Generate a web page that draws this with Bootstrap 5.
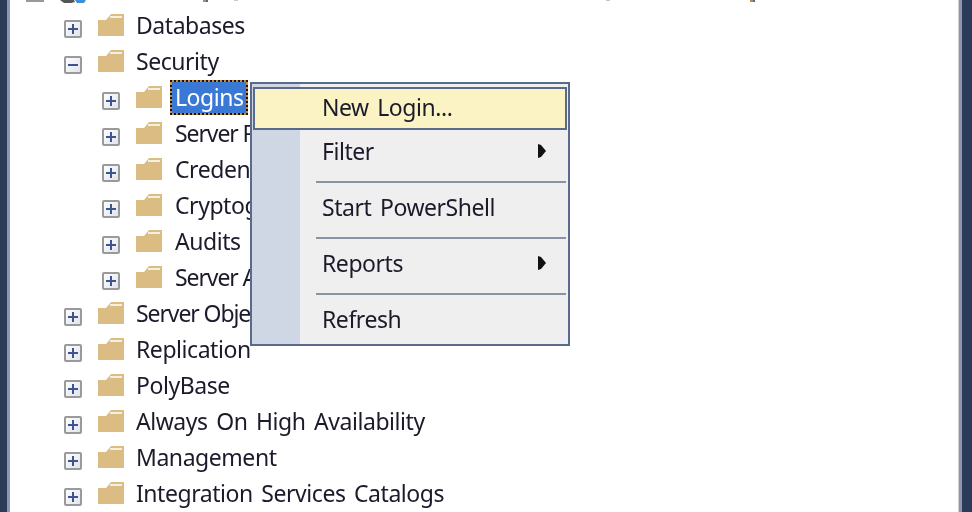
<!DOCTYPE html>
<html lang="en">
<head>
<meta charset="utf-8">
<title>Object Explorer</title>
<link href="https://cdn.jsdelivr.net/npm/bootstrap@5.3.0/dist/css/bootstrap.min.css" rel="stylesheet">
<style>
html,body{width:972px;height:512px;overflow:hidden;background:#fff}
.frame{width:972px;height:512px;background:#2b3b58;padding:0 10px 0 7px;filter:blur(.45px)}
.panel{height:512px;background:#fff;border-left:3px solid #8d97b3;border-right:3px solid #8d97b3;box-shadow:inset -1px 0 0 #d0d0d0;overflow:hidden;position:relative;font-family:"Noto Sans","Liberation Sans",sans-serif;font-size:23px;letter-spacing:-.45px;word-spacing:3px;color:#1b1b2b}
.tree,.tree ul{list-style:none;margin:0;padding:0}
.tree{padding-left:54px}
.tree ul{padding-left:38px}
.top-row{height:36px;margin-top:-28px;margin-left:-54px;display:block}
.tree-row{height:36px;display:flex;align-items:flex-start;line-height:36px}
.exp{width:18px;height:18px;flex:none;margin-top:12px;margin-right:16px}
.folder{width:26px;height:22px;flex:none;margin-top:6px;margin-right:12px}
.tree ul .folder{margin-right:13px}
.label{white-space:nowrap;margin-top:-1px;height:36px;line-height:36px}
.tight{letter-spacing:-1.1px;word-spacing:0}
.tree ul .sel{background:linear-gradient(#3a78d6,#3a78d6) padding-box,#c98a3a border-box;color:#fff;border:2px dotted #1a1206;padding:0 3px;margin-left:-5px;margin-top:0;height:35px;line-height:31px;width:78px}
.ctx.dropdown-menu{position:absolute;left:240px;top:82px;width:320px;height:264px;padding:3px 1px 0 1px;border:2px solid #5a6a8c;border-radius:0;background:linear-gradient(to right,#cfd6e4 48px,#efefef 48px);font-size:23px;display:block;margin:0;min-width:0}
.ctx .dropdown-item{display:flex;justify-content:space-between;align-items:center;height:53px;padding:0 21px 7px 69px;color:#1b1b2b;background:transparent;white-space:nowrap}
.ctx .dropdown-item.hot{height:43px;margin-bottom:1px;margin-right:4px;padding:0 0 2px 67px;background:#fbf3c4;border:2px solid #5b6a8a}
.ctx .dropdown-item.first{height:50px;padding-bottom:10px}
.ctx .dropdown-item.last{height:46px;padding-bottom:0}
.ctx .dropdown-divider{height:2px;margin:0 1px 1px 63px;border:0;background:#8a93a6;opacity:1}
.arrow{width:8px;height:14px;flex:none}
</style>
</head>
<body>
<div class="frame">
<div class="panel">
<ul class="tree">
  <li>
    <svg class="top-row" width="800" height="36" viewBox="0 0 800 36" aria-hidden="true">
      <rect x="16" y="28" width="18" height="2" fill="#999"/>
      <path d="M50 28h14l1 2-4 1h-7z" fill="#555"/>
      <path d="M65 28h11l-2 3h-7z" fill="#3d8fdc"/>
      <rect x="193" y="28" width="3" height="2" fill="#b98a50"/>
      <rect x="196" y="28" width="2" height="2" fill="#3f6fb0"/>
      <rect x="224" y="28" width="4" height="1" fill="#c8c8c8"/>
      <rect x="596" y="28" width="4" height="1" fill="#c8c8c8"/>
      <rect x="740" y="28" width="3" height="2" fill="#b98a50"/>
      <rect x="743" y="28" width="2" height="2" fill="#3f6fb0"/>
    </svg>
  </li>
  <li class="tree-row"><svg class="exp"><use href="#plus"/></svg><svg class="folder"><use href="#fold"/></svg><span class="label">Databases</span></li>
  <li>
    <div class="tree-row"><svg class="exp"><use href="#minus"/></svg><svg class="folder"><use href="#fold"/></svg><span class="label">Security</span></div>
    <ul>
      <li class="tree-row"><svg class="exp"><use href="#plus"/></svg><svg class="folder"><use href="#fold"/></svg><span class="label sel">Logins</span></li>
      <li class="tree-row"><svg class="exp"><use href="#plus"/></svg><svg class="folder"><use href="#fold"/></svg><span class="label tight">Server Roles</span></li>
      <li class="tree-row"><svg class="exp"><use href="#plus"/></svg><svg class="folder"><use href="#fold"/></svg><span class="label">Credentials</span></li>
      <li class="tree-row"><svg class="exp"><use href="#plus"/></svg><svg class="folder"><use href="#fold"/></svg><span class="label">Cryptographic Providers</span></li>
      <li class="tree-row"><svg class="exp"><use href="#plus"/></svg><svg class="folder"><use href="#fold"/></svg><span class="label">Audits</span></li>
      <li class="tree-row"><svg class="exp"><use href="#plus"/></svg><svg class="folder"><use href="#fold"/></svg><span class="label tight">Server Audit Specifications</span></li>
    </ul>
  </li>
  <li class="tree-row"><svg class="exp"><use href="#plus"/></svg><svg class="folder"><use href="#fold"/></svg><span class="label tight">Server Objects</span></li>
  <li class="tree-row"><svg class="exp"><use href="#plus"/></svg><svg class="folder"><use href="#fold"/></svg><span class="label">Replication</span></li>
  <li class="tree-row"><svg class="exp"><use href="#plus"/></svg><svg class="folder"><use href="#fold"/></svg><span class="label">PolyBase</span></li>
  <li class="tree-row"><svg class="exp"><use href="#plus"/></svg><svg class="folder"><use href="#fold"/></svg><span class="label">Always On High Availability</span></li>
  <li class="tree-row"><svg class="exp"><use href="#plus"/></svg><svg class="folder"><use href="#fold"/></svg><span class="label">Management</span></li>
  <li class="tree-row"><svg class="exp"><use href="#plus"/></svg><svg class="folder"><use href="#fold"/></svg><span class="label">Integration Services Catalogs</span></li>
</ul>

<div class="dropdown-menu show ctx">
  <a class="dropdown-item hot" href="#">New Login...</a>
  <a class="dropdown-item first" href="#">Filter<svg class="arrow" viewBox="0 0 8 14"><path d="M0 0l3 1 5 6-5 6-3 1z" fill="#111"/></svg></a>
  <hr class="dropdown-divider">
  <a class="dropdown-item" href="#">Start PowerShell</a>
  <hr class="dropdown-divider">
  <a class="dropdown-item" href="#">Reports<svg class="arrow" viewBox="0 0 8 14"><path d="M0 0l3 1 5 6-5 6-3 1z" fill="#111"/></svg></a>
  <hr class="dropdown-divider">
  <a class="dropdown-item last" href="#">Refresh</a>
</div>
</div>
</div>

<svg width="0" height="0" class="d-block" aria-hidden="true">
  <defs>
    <linearGradient id="g" x1="0" y1="0" x2="1" y2="1"><stop offset="0" stop-color="#fff"/><stop offset="1" stop-color="#dfe2ea"/></linearGradient>
    <symbol id="fold" viewBox="0 0 26 22"><path d="M0 6h8l5-6h13v22H0z" fill="#dbbd84"/><rect x="12" y="2" width="12" height="2" fill="#f6efe0"/></symbol>
    <symbol id="plus" viewBox="0 0 18 18"><rect x="1" y="1" width="16" height="16" rx="1" fill="url(#g)" stroke="#9a9a9a" stroke-width="2"/><path d="M4 9h10M9 4v10" stroke="#3c5590" stroke-width="2"/></symbol>
    <symbol id="minus" viewBox="0 0 18 18"><rect x="1" y="1" width="16" height="16" rx="1" fill="url(#g)" stroke="#9a9a9a" stroke-width="2"/><path d="M4 9h10" stroke="#3c5590" stroke-width="2"/></symbol>
  </defs>
</svg>
<script src="https://cdn.jsdelivr.net/npm/bootstrap@5.3.0/dist/js/bootstrap.bundle.min.js"></script>
</body>
</html>
